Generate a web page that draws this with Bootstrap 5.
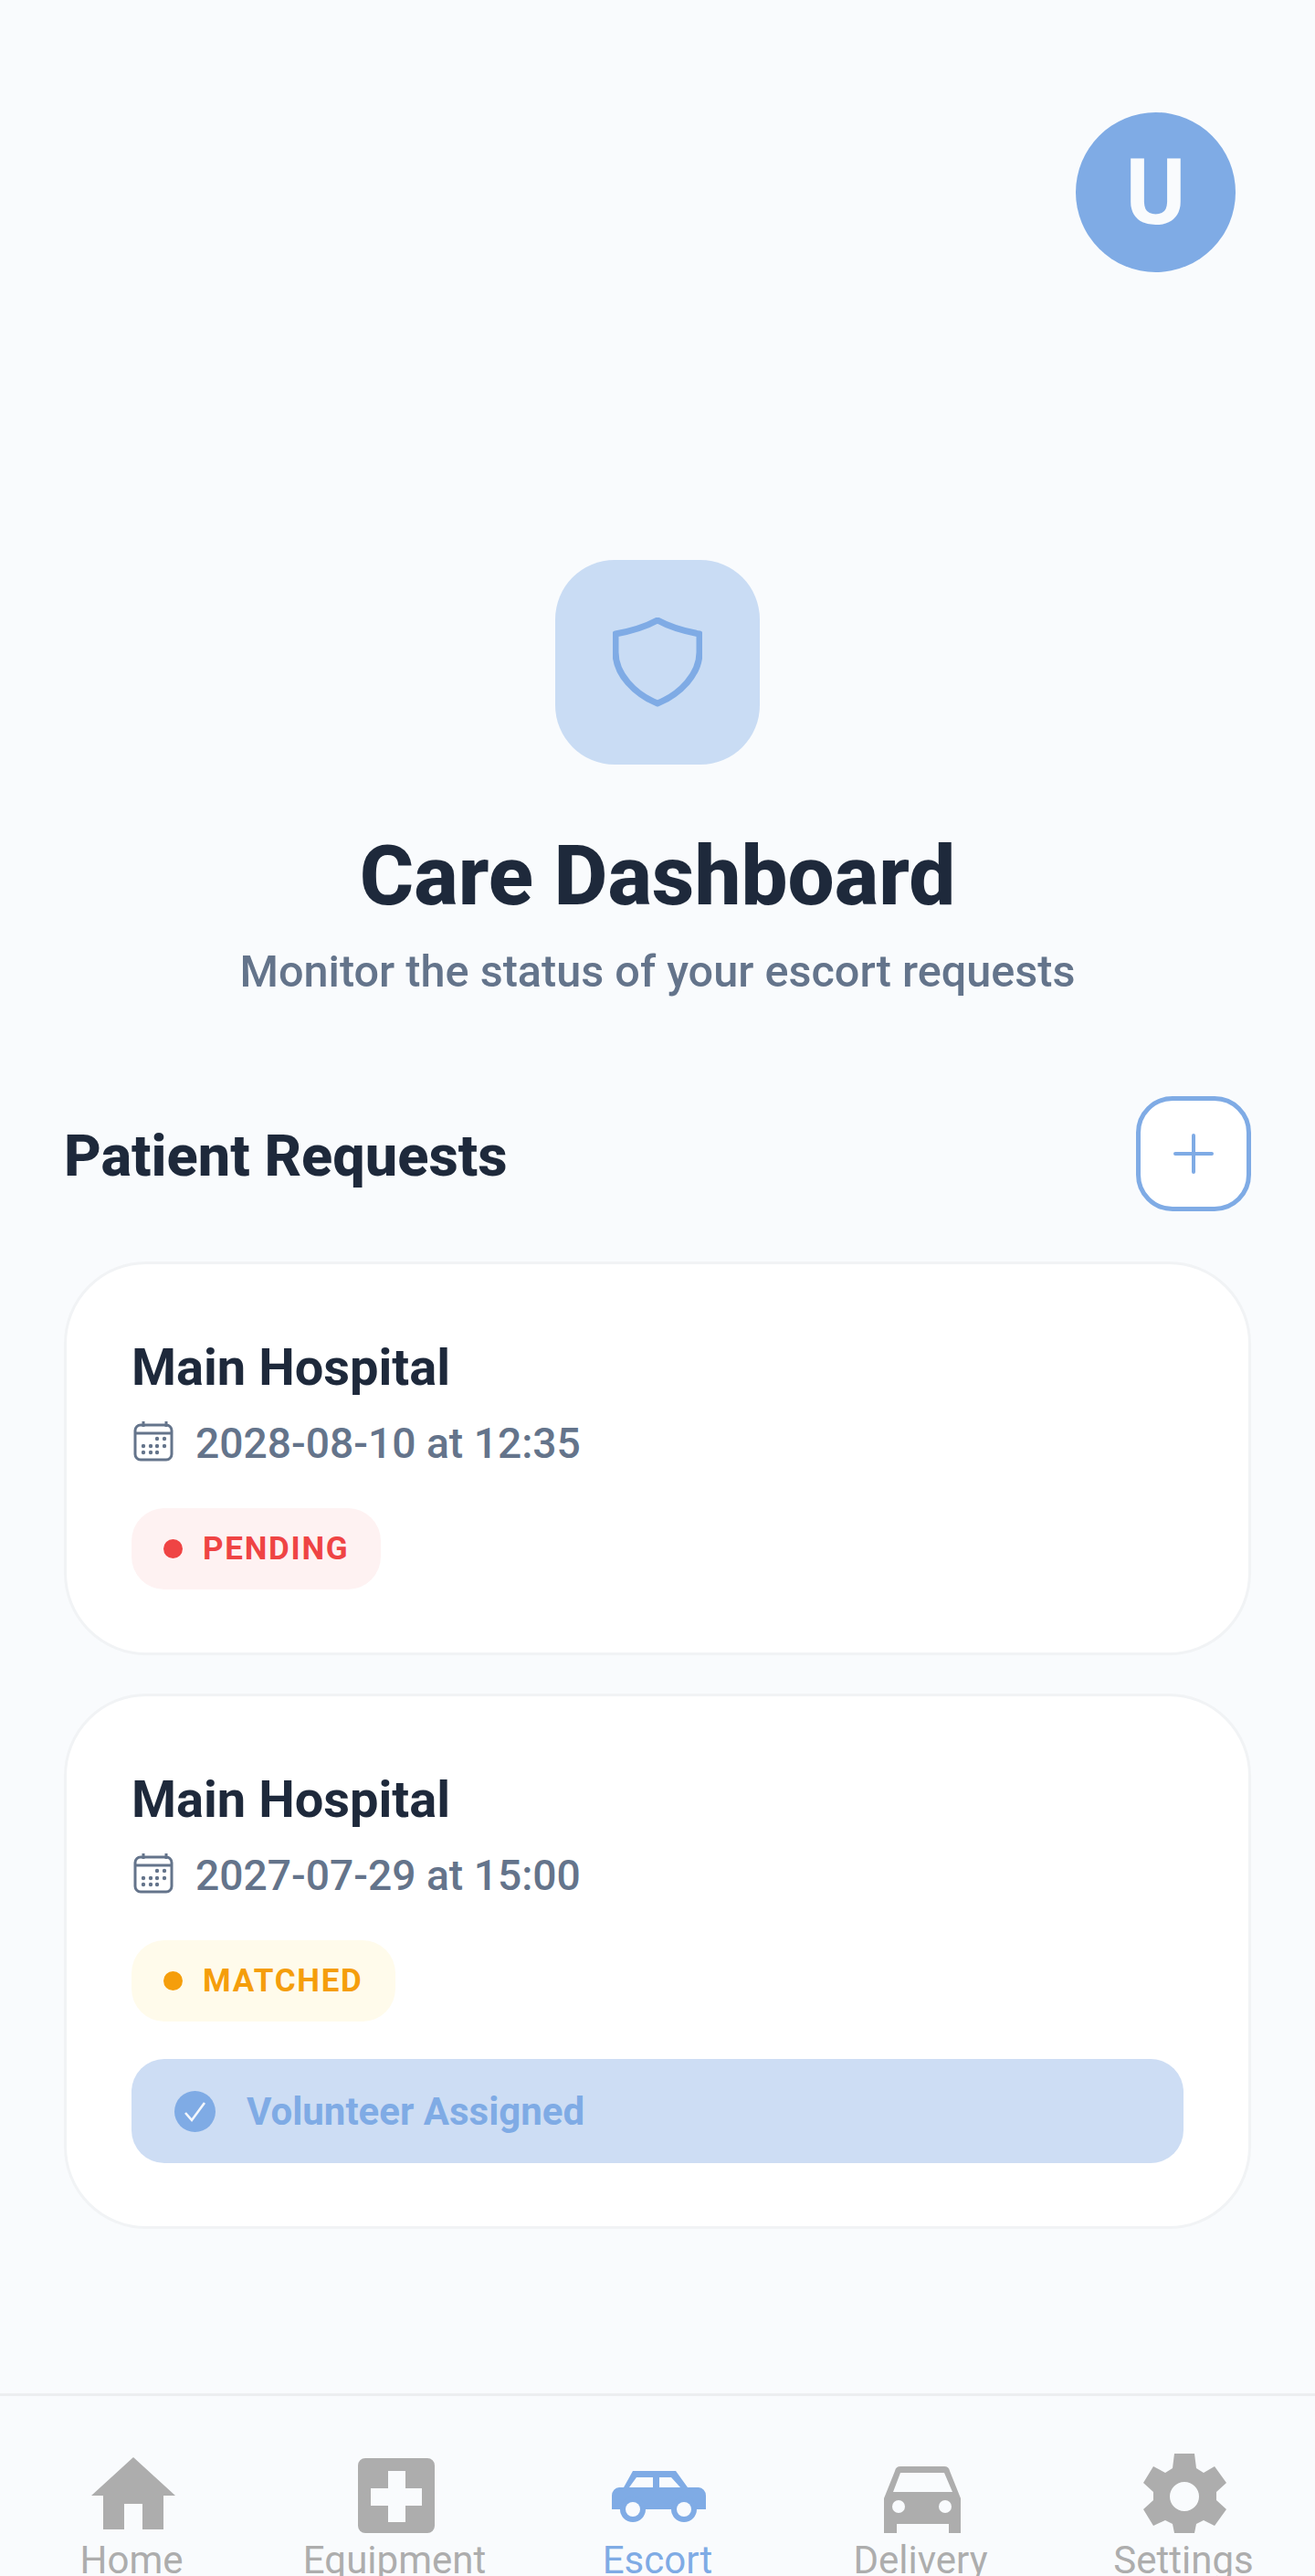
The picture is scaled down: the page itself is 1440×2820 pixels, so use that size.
<!DOCTYPE html>
<html lang="en">
<head>
    <meta charset="UTF-8">
    <title>Care Dashboard</title>
    <link href="https://cdn.jsdelivr.net/npm/bootstrap@5.3.0/dist/css/bootstrap.min.css" rel="stylesheet">
    <style>
        body { background: #f9fbfd; font-family: Roboto, "Liberation Sans", sans-serif; color: #1e293b; }
        .page-main { padding: 123px 70px 0; }
        .user-avatar { width: 175px; height: 175px; margin-right: 17px; background: #7fabe5; color: #f9fbfd; font-size: 100px; font-weight: 700; }
        .hero-icon { width: 224px; height: 224px; margin-top: 315px; background: #c9dcf4; border-radius: 65px; }
        .hero-title { font-size: 90.8px; font-weight: 800; line-height: 1; margin: 77px 0 0; }
        .hero-sub { font-size: 48.6px; font-weight: 500; color: #64748b; line-height: 1; margin: 35px 0 0; }
        .req-head { margin-top: 112px; margin-bottom: 55px; }
        .req-title { font-size: 63px; font-weight: 800; margin: 4px 0 0; line-height: 1; }
        .add-btn { width: 126px; height: 126px; padding: 0; background: #fff; border: 5px solid #7fabe5; border-radius: 40px; }
        .req-card { background: #fff; border: 3px solid #f1f3f5; border-radius: 90px; padding: 85px 71px 69px; margin-bottom: 42px; }
        .req-name { font-size: 56px; font-weight: 700; line-height: 1; margin: 0; }
        .req-date { font-size: 46.2px; font-weight: 500; color: #64748b; line-height: 1; margin-top: 31px; gap: 24px; }
        .req-date svg { margin-left: 2px; margin-bottom: 4px; }
        .req-status { width: fit-content; height: 89px; padding: 0 35px; border-radius: 36px; font-size: 35px; font-weight: 700; letter-spacing: 1.7px; margin-top: 47px; gap: 22px; }
        .req-status i { width: 21px; height: 21px; border-radius: 50%; background: currentColor; }
        .status-pending { background: #fef2f2; color: #ef4444; }
        .status-matched { background: #fffbeb; color: #f59e0b; }
        .assigned-bar { height: 114px; margin-top: 41px; padding-left: 47px; gap: 34px; border-radius: 36px; background: #cdddf4; color: #7fabe5; font-size: 42px; font-weight: 700; }
        .tab-bar { height: 200px; border-top: 3px solid #eceef0; }
        .tab-item { height: 197px; color: #adadad; font-size: 42px; line-height: 1; }
        .tab-item.is-active { color: #7fabe5; }
        .tab-icon { height: 90px; margin-top: 60px; margin-bottom: 9px; padding-left: 3px; }
        .lift-home { margin-bottom: 4px; }
        .lift-car { margin-bottom: 12px; }
    </style>
</head>
<body class="d-flex flex-column vh-100 overflow-hidden">
    <div class="page-main flex-grow-1">
        <div class="d-flex justify-content-end">
            <div class="user-avatar rounded-circle d-flex align-items-center justify-content-center">U</div>
        </div>
        <div class="text-center">
            <div class="hero-icon d-flex align-items-center justify-content-center mx-auto">
                <svg width="98" height="98" viewBox="0 0 98 98" fill="none" stroke="#7fabe5" stroke-width="7" stroke-linejoin="round"><path d="M49 3C38 9 20 15 3 18V38C3 62 24 84 49 94C74 84 95 62 95 38V18C78 15 60 9 49 3Z"/></svg>
            </div>
            <h1 class="hero-title">Care Dashboard</h1>
            <p class="hero-sub">Monitor the status of your escort requests</p>
        </div>
        <div class="req-head d-flex justify-content-between align-items-center">
            <h2 class="req-title">Patient Requests</h2>
            <button class="add-btn d-flex align-items-center justify-content-center" type="button">
                <svg width="44" height="44" viewBox="0 0 44 44" stroke="#7fabe5" stroke-width="4" stroke-linecap="round"><path d="M22 2V42M2 22H42"/></svg>
            </button>
        </div>
        <div class="req-card">
            <h3 class="req-name">Main Hospital</h3>
            <div class="req-date d-flex align-items-center">
                <svg width="44" height="44" viewBox="0 0 44 44" fill="none" stroke="#64748b" stroke-width="3"><rect x="2" y="4" width="40" height="38" rx="6"/><path d="M2 13H42M11 0V6M36 0V6"/><g fill="#64748b" stroke="none"><circle cx="26" cy="19" r="2.2"/><circle cx="34" cy="19" r="2.2"/><circle cx="11" cy="27" r="2.2"/><circle cx="19" cy="27" r="2.2"/><circle cx="26" cy="27" r="2.2"/><circle cx="34" cy="27" r="2.2"/><circle cx="11" cy="34" r="2.2"/><circle cx="19" cy="34" r="2.2"/><circle cx="26" cy="34" r="2.2"/></g></svg>
                <span>2028-08-10 at 12:35</span>
            </div>
            <div class="req-status status-pending d-flex align-items-center"><i></i><span>PENDING</span></div>
        </div>
        <div class="req-card">
            <h3 class="req-name">Main Hospital</h3>
            <div class="req-date d-flex align-items-center">
                <svg width="44" height="44" viewBox="0 0 44 44" fill="none" stroke="#64748b" stroke-width="3"><rect x="2" y="4" width="40" height="38" rx="6"/><path d="M2 13H42M11 0V6M36 0V6"/><g fill="#64748b" stroke="none"><circle cx="26" cy="19" r="2.2"/><circle cx="34" cy="19" r="2.2"/><circle cx="11" cy="27" r="2.2"/><circle cx="19" cy="27" r="2.2"/><circle cx="26" cy="27" r="2.2"/><circle cx="34" cy="27" r="2.2"/><circle cx="11" cy="34" r="2.2"/><circle cx="19" cy="34" r="2.2"/><circle cx="26" cy="34" r="2.2"/></g></svg>
                <span>2027-07-29 at 15:00</span>
            </div>
            <div class="req-status status-matched d-flex align-items-center"><i></i><span>MATCHED</span></div>
            <div class="assigned-bar d-flex align-items-center">
                <svg width="45" height="45" viewBox="0 0 45 45"><circle cx="22.5" cy="22.5" r="22.5" fill="#7fabe5"/><path d="M12 24L19 32L33 13" fill="none" stroke="#f4f7fc" stroke-width="2.6"/></svg>
                <span>Volunteer Assigned</span>
            </div>
        </div>
    </div>
    <div class="tab-bar row g-0 flex-shrink-0">
        <div class="tab-item col text-center">
            <div class="tab-icon d-flex align-items-end justify-content-center">
                <svg class="lift-home" width="92" height="79" viewBox="0 0 92 79" fill="currentColor"><path d="M46 0L92 42H79V79H56V51H36V79H13V42H0Z"/></svg>
            </div>
            Home
        </div>
        <div class="tab-item col text-center">
            <div class="tab-icon d-flex align-items-end justify-content-center">
                <svg width="84" height="82" viewBox="0 0 84 82"><path fill="currentColor" fill-rule="evenodd" d="M8 0H76A8 8 0 0 1 84 8V74A8 8 0 0 1 76 82H8A8 8 0 0 1 0 74V8A8 8 0 0 1 8 0ZM33 14V33H14V52H33V70H52V52H70V33H52V14Z"/></svg>
            </div>
            Equipment
        </div>
        <div class="tab-item is-active col text-center">
            <div class="tab-icon d-flex align-items-end justify-content-center">
                <svg class="lift-car" width="104" height="56" viewBox="0 0 104 56" fill="currentColor"><path fill-rule="evenodd" d="M23 0H70L83 18H95A8 9 0 0 1 103 27V42H0V27A8 9 0 0 1 8 18H13ZM27 7L19 18H45V7ZM52 7V18H75L65 7Z"/><circle cx="23" cy="42" r="14"/><circle cx="79" cy="42" r="14"/><circle cx="23" cy="42" r="8" fill="#f9fbfd"/><circle cx="79" cy="42" r="8" fill="#f9fbfd"/></svg>
            </div>
            Escort
        </div>
        <div class="tab-item col text-center">
            <div class="tab-icon d-flex align-items-end justify-content-center">
                <svg width="84" height="73" viewBox="0 0 84 73" fill="currentColor"><path fill-rule="evenodd" d="M18 0H66Q71 0 72 5L84 35V73H71V63H14V73H0V35L12 5Q13 0 18 0ZM18 7L10 28H75L66 7Z"/><circle cx="16" cy="44" r="7" fill="#f9fbfd"/><circle cx="67" cy="44" r="7" fill="#f9fbfd"/></svg>
            </div>
            Delivery
        </div>
        <div class="tab-item col text-center">
            <div class="tab-icon d-flex align-items-end justify-content-center">
                <svg width="91" height="87" viewBox="0 0 91 87" fill="currentColor"><path fill-rule="evenodd" d="M34 0H56L58 16L66 21L78 14L91 32L80 42V51L91 61L78 79L66 73L58 77L56 87H34L32 77L24 73L11 79L0 61L11 51V42L0 32L11 14L24 21L32 16ZM45 31A16 16 0 1 0 45 63A16 16 0 1 0 45 31Z"/></svg>
            </div>
            Settings
        </div>
    </div>
    <script src="https://cdn.jsdelivr.net/npm/bootstrap@5.3.0/dist/js/bootstrap.bundle.min.js"></script>
</body>
</html>
